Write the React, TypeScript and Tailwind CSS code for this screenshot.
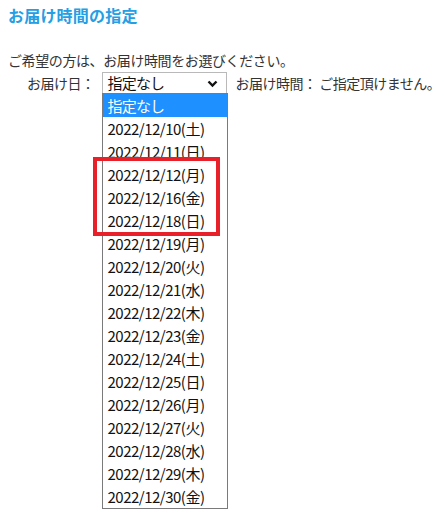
const dates = [
  "2022/12/10(土)",
  "2022/12/11(日)",
  "2022/12/12(月)",
  "2022/12/16(金)",
  "2022/12/18(日)",
  "2022/12/19(月)",
  "2022/12/20(火)",
  "2022/12/21(水)",
  "2022/12/22(木)",
  "2022/12/23(金)",
  "2022/12/24(土)",
  "2022/12/25(日)",
  "2022/12/26(月)",
  "2022/12/27(火)",
  "2022/12/28(水)",
  "2022/12/29(木)",
  "2022/12/30(金)",
];

function Chevron() {
  return (
    <svg width="11" height="8" viewBox="0 0 11 8" className="shrink-0">
      <path d="M1.5 1.5 L5.5 5.5 L9.5 1.5" fill="none" stroke="#111" strokeWidth="2.4" />
    </svg>
  );
}

export default function App() {
  return (
    <div className="relative w-[445px] h-[512px] overflow-hidden bg-white text-[#333] font-['Noto_Sans_CJK_JP','Noto_Sans',sans-serif]">
      <div className="px-2 pt-[4px]">
        {/* Heading */}
        <h2 className="text-[16px] leading-[22px] font-bold text-[#259ee3] tracking-[0.2px]">
          お届け時間の指定
        </h2>

        <p className="mt-[24px] text-[14px] leading-[20px] tracking-[-0.4px] whitespace-nowrap">
          ご希望の方は、お届け時間をお選びください。
        </p>

        {/* Delivery date row */}
        <div className="flex items-center mt-[2px] pl-[19px] text-[14px] tracking-[-0.5px] whitespace-nowrap">
          <span>お届け日：</span>
          <div className="relative ml-[7px]">
            <div className="flex items-center justify-between w-[125px] h-[23px] pl-[5px] pr-[8px] border border-[#b9b9b9] bg-white text-[#111] text-[15px] tracking-[-0.8px]">
              <span>指定なし</span>
              <Chevron />
            </div>

            {/* Open dropdown list */}
            <div className="absolute left-0 top-[21px] z-10 w-[126px] border border-[#7a7a7a] bg-white text-[15px] text-[#111] tracking-[-0.5px]">
              <div className="h-[23px] leading-[23px] pl-[5px] bg-[#1e90ff] text-white tracking-[-0.8px]">
                指定なし
              </div>
              {dates.map((d) => (
                <div key={d} className="h-[23px] leading-[23px] pl-[5px]">
                  {d}
                </div>
              ))}
            </div>

            {/* Annotation box */}
            <div className="absolute left-[-9px] top-[85px] z-20 w-[127px] h-[79px] border-[4px] border-[#e8202a]" />
          </div>
          <span className="ml-[9px]">お届け時間： ご指定頂けません。</span>
        </div>
      </div>
    </div>
  );
}
